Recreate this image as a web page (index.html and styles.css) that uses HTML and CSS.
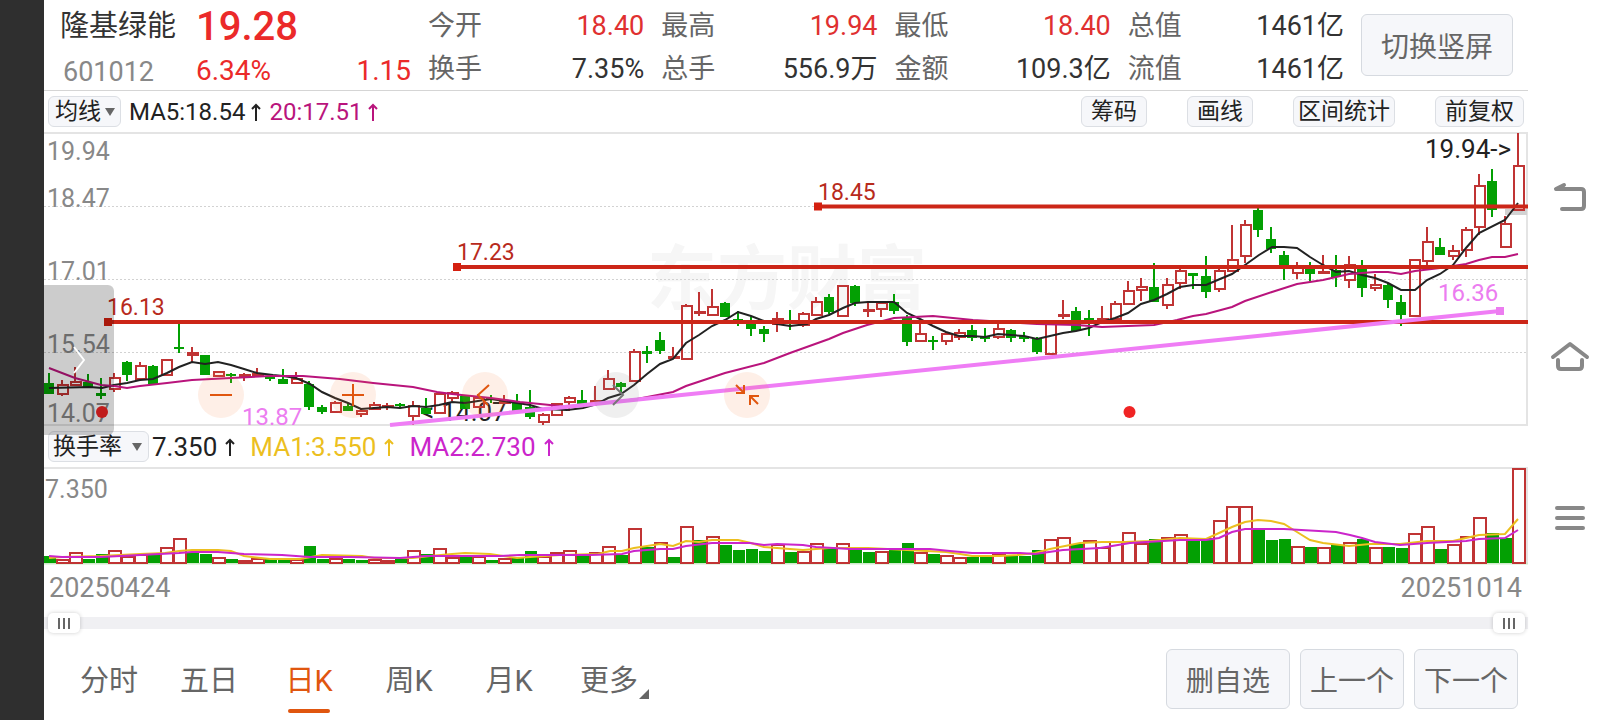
FILE: index.html
```html
<!DOCTYPE html>
<html lang="zh-CN">
<head>
    <meta charset="utf-8">
    <title>隆基绿能 601012</title>
    <link rel="stylesheet" href="styles.css">
</head>
<body>
    <div class="edge"></div>
    <main class="stock">
        <header class="quote">
            <div class="identity">
                <h1 class="name">隆基绿能</h1>
                <span class="code">601012</span>
            </div>
            <div class="price">
                <strong class="last">19.28</strong>
                <div class="change"><span>6.34%</span><span>1.15</span></div>
            </div>
            <dl class="stats">
                <div><dt>今开</dt><dd class="up">18.40</dd></div>
                <div><dt>最高</dt><dd class="up">19.94</dd></div>
                <div><dt>最低</dt><dd class="up">18.40</dd></div>
                <div><dt>总值</dt><dd>1461亿</dd></div>
                <div><dt>换手</dt><dd>7.35%</dd></div>
                <div><dt>总手</dt><dd>556.9万</dd></div>
                <div><dt>金额</dt><dd>109.3亿</dd></div>
                <div><dt>流值</dt><dd>1461亿</dd></div>
            </dl>
            <button class="rotate">切换竖屏</button>
        </header>

        <div class="toolbar">
            <button class="chip drop">均线<i class="caret"></i></button>
            <span class="ma ma5">MA5:18.54<svg class="arrow" viewBox="0 0 10 18"><path d="M5 18V2M1 6l4-4 4 4"/></svg></span>
            <span class="ma ma20">20:17.51<svg class="arrow" viewBox="0 0 10 18"><path d="M5 18V2M1 6l4-4 4 4"/></svg></span>
            <div class="tools">
                <button class="chip">筹码</button>
                <button class="chip">画线</button>
                <button class="chip tight">区间统计</button>
                <button class="chip">前复权</button>
            </div>
        </div>

        <section class="chart">
            <svg class="kline" viewBox="44 132 1484 294" preserveAspectRatio="none">
                <text class="watermark" x="647" y="304">东方财富</text>
                <path class="grid" d="M44 206.500H1527M44 279.500H1527M44 352.500H1527"/>
                <path class="frame" d="M44 133H1527V425H44"/>
                <rect x="1505" y="209" width="22" height="6" fill="#d2d2d2"/>
                <g class="axis">
                    <text x="47" y="160">19.94</text>
                    <text x="47" y="207">18.47</text>
                    <text x="47" y="280">17.01</text>
                    <text x="47" y="353">15.54</text>
                    <text x="47" y="422">14.07</text>
                </g>
                <text class="mark" x="1425" y="158">19.94-&gt;</text>
                <text class="mark" x="421" y="421">&lt;-14.07</text>
                <g id="candles"></g>
                <polyline id="ma5" class="line" stroke="#222"/>
                <polyline id="ma20" class="line" stroke="#b9147c"/>
                <g class="level">
                    <path d="M108 322H1528M457 267H1528M818 206.500H1528"/>
                    <path class="knob" d="M104 318h8v8h-8zM453 263h8v8h-8zM814 202.500h8v8h-8z"/>
                    <text x="107" y="315">16.13</text>
                    <text x="457" y="260">17.23</text>
                    <text x="818" y="200">18.45</text>
                </g>
                <g class="trend">
                    <path d="M390 425L1500 311"/>
                    <path class="knob" d="M1496 307h8v8h-8z"/>
                    <text x="242" y="425">13.87</text>
                    <text x="1438" y="301">16.36</text>
                </g>
                <circle cx="102" cy="412" r="6" fill="#f02424"/>
                <circle cx="1129.500" cy="412" r="6" fill="#f02424"/>
            </svg>
            <button class="round minus" aria-label="缩小"><svg viewBox="0 0 46 46"><path d="M12 23h22"/></svg></button>
            <button class="round plus" aria-label="放大"><svg viewBox="0 0 46 46"><path d="M12 23h22M23 12v22"/></svg></button>
            <button class="round prev" aria-label="左移"><svg viewBox="0 0 46 46"><path d="M27 13L16 23l10 10"/></svg></button>
            <button class="round next" aria-label="右移"><svg viewBox="0 0 46 46"><path d="M20 13l10 10-10 10"/></svg></button>
            <button class="round shrink" aria-label="收起"><svg viewBox="0 0 46 46"><path d="M12 21h8v-8M12 13l8 8M26 33v-9h9M26 24l8 8"/></svg></button>
            <button class="drawer" aria-label="展开"><svg viewBox="0 0 12 28"><path d="M1 1l10 13L1 27"/></svg></button>
        </section>

        <div class="toolbar turnover">
            <button class="chip drop">换手率<i class="caret"></i></button>
            <span class="ma">7.350<svg class="arrow" viewBox="0 0 10 18"><path d="M5 18V2M1 6l4-4 4 4"/></svg></span>
            <span class="ma ma1">MA1:3.550<svg class="arrow" viewBox="0 0 10 18"><path d="M5 18V2M1 6l4-4 4 4"/></svg></span>
            <span class="ma ma2">MA2:2.730<svg class="arrow" viewBox="0 0 10 18"><path d="M5 18V2M1 6l4-4 4 4"/></svg></span>
        </div>

        <svg class="volume" viewBox="44 467 1484 98" preserveAspectRatio="none">
            <path class="frame" d="M44 468H1527V564"/>
            <path d="M44 563.500H1528" stroke="#cfeacb" stroke-width="2"/>
            <text class="axis" x="45" y="498">7.350</text>
            <g id="bars"></g>
            <polyline id="vma1" class="line" stroke="#ecbf1f"/>
            <polyline id="vma2" class="line" stroke="#cb25cb"/>
        </svg>

        <div class="dates"><span>20250424</span><span>20251014</span></div>

        <div class="range">
            <input type="range" min="0" max="100" value="0" aria-label="开始日期">
            <input type="range" min="0" max="100" value="100" aria-label="结束日期">
        </div>

        <footer class="bottom">
            <nav class="tabs">
                <a href="#">分时</a>
                <a href="#">五日</a>
                <a href="#" class="active">日K</a>
                <a href="#">周K</a>
                <a href="#">月K</a>
                <a href="#" class="more">更多</a>
            </nav>
            <div class="actions">
                <button class="remove">删自选</button>
                <button>上一个</button>
                <button>下一个</button>
            </div>
        </footer>
    </main>

    <nav class="system">
        <button aria-label="返回"><svg width="40" height="32" viewBox="0 0 40 32"><path d="M14 4L6 8H31Q34 8 34 11V25Q34 28 31 28H12"/></svg></button>
        <button aria-label="主页"><svg width="40" height="32" viewBox="0 0 40 32"><path d="M3 16L20 3l17 13M8 19v6q0 3 3 3h18q3 0 3-3v-6"/></svg></button>
        <button aria-label="菜单"><svg width="40" height="32" viewBox="0 0 40 32"><path d="M7 7h26M7 17h26M7 27h26"/></svg></button>
    </nav>
    <script src="chart.js"></script>
</body>
</html>
```

FILE: styles.css
```css
* {
    box-sizing: border-box;
}
body {
    margin: 0;
    min-height: 100vh;
    display: flex;
    background: #fff;
    color: #333;
    font-family: Roboto, "Noto Sans CJK SC", sans-serif;
    font-size: 27px;
}
button {
    padding: 0;
    border: 1px solid #d6dae0;
    border-radius: 6px;
    background: #f6f7fa;
    color: #666;
    font-family: inherit;
    font-size: 28px;
    cursor: pointer;
}
.edge {
    width: 44px;
    background: #2f2f2f;
}
.stock {
    flex: 1;
    min-width: 0;
}

/* quote header */
.quote {
    display: flex;
    height: 91px;
    padding: 5px 15px 0 16px;
    border-bottom: 1px solid #d5d5d5;
    line-height: 42px;
}
.identity {
    width: 136px;
}
.name {
    margin: 0;
    font-size: 29px;
    font-weight: 400;
}
.code {
    display: block;
    padding-left: 3px;
    line-height: 50px;
    color: #888;
}
.price {
    width: 232px;
    color: #eb2a2a;
}
.last {
    display: block;
    font-size: 40px;
    font-weight: 500;
    line-height: 44px;
}
.change {
    display: flex;
    justify-content: space-between;
    padding-right: 17px;
    line-height: 44px;
    font-size: 28px;
}
.stats {
    flex: 1;
    display: grid;
    grid-template-columns: repeat(4, 1fr);
    margin: 0;
}
.stats div {
    display: flex;
    justify-content: space-between;
    padding-right: 17px;
}
.stats dt {
    color: #666;
}
.stats dd {
    margin: 0;
}
.stats .up {
    color: #e03030;
}
.rotate {
    width: 152px;
    height: 62px;
    margin-top: 9px;
}

/* indicator rows */
.toolbar {
    display: flex;
    align-items: center;
    height: 41px;
    padding: 0 4px;
    color: #222;
    font-size: 24px;
}
.chip {
    height: 31px;
    padding: 0 9px;
    border-color: #dcdfe4;
    color: #222;
    font-size: 23px;
    line-height: 28px;
}
.chip.tight {
    padding: 0 4px;
}
.chip.drop {
    display: flex;
    align-items: center;
    justify-content: space-between;
    width: 73px;
    padding: 0 5px 0 6px;
}
.turnover .chip.drop {
    width: 101px;
    padding: 0 6px 0 4px;
}
.caret {
    border: 5px solid transparent;
    border-top: 8px solid #666;
    border-bottom: 0;
}
.ma {
    display: flex;
    align-items: center;
    gap: 6px;
    margin-left: 8px;
}
.turnover .ma {
    margin-left: 15px;
    gap: 8px;
    font-size: 26px;
}
.turnover .chip + .ma {
    margin-left: 3px;
}
.ma20 {
    color: #b9147c;
}
.turnover .ma1 {
    color: #ecbf1f;
}
.turnover .ma2 {
    color: #cb25cb;
}
.arrow {
    width: 10px;
    height: 18px;
    fill: none;
    stroke: currentColor;
    stroke-width: 2;
}
.tools {
    display: flex;
    gap: 40px;
    margin-left: auto;
}

/* charts */
.chart {
    position: relative;
    height: 294px;
}
.kline, .volume {
    display: block;
    width: 100%;
    height: 294px;
    overflow: visible;
}
.volume {
    height: 98px;
}
.frame {
    fill: none;
    stroke: #e4e4e4;
    stroke-width: 2;
}
.grid {
    stroke: #d2d2d2;
    stroke-dasharray: 2 2;
}
.watermark {
    fill: #f6f6f6;
    font-size: 70px;
    font-weight: 700;
}
.axis {
    fill: #888;
    font-size: 25px;
}
.mark {
    fill: #222;
    font-size: 26px;
}
.line {
    fill: none;
    stroke-width: 2;
}
.down {
    fill: #03a003;
}
.rise {
    fill: none;
    stroke: #c03434;
    stroke-width: 2;
}
.wick {
    fill: none;
    stroke: #c03434;
    stroke-width: 2;
}
.wick.fall {
    stroke: #03a003;
}
.level {
    fill: #b82a1c;
    stroke-width: 4;
    font-size: 23px;
}
.level path {
    stroke: #cc2618;
}
.trend {
    fill: #ec7df0;
    stroke-width: 4;
    font-size: 24px;
}
.trend path {
    stroke: #ef7df5;
}
.level .knob, .trend .knob {
    stroke: none;
}
.level .knob {
    fill: #d42010;
}

/* controls over the chart */
.round {
    position: absolute;
    top: 240px;
    width: 46px;
    height: 46px;
    border: 0;
    border-radius: 50%;
    background: rgba(245, 125, 60, 0.12);
    color: #e0560f;
}
.round svg {
    display: block;
    fill: none;
    stroke: currentColor;
    stroke-width: 2;
}
.minus {
    left: 10.4%;
}
.plus {
    left: 19.3%;
}
.prev {
    left: 28.2%;
}
.next {
    left: 37%;
    background: rgba(120, 120, 120, 0.12);
    color: #777;
}
.shrink {
    left: 45.8%;
}
.drawer {
    position: absolute;
    left: 0;
    top: 153px;
    width: 70px;
    height: 150px;
    border: 0;
    border-radius: 0 6px 6px 0;
    background: rgba(0, 0, 0, 0.2);
}
.drawer svg {
    display: block;
    width: 12px;
    height: 28px;
    margin: 0 auto;
    fill: none;
    stroke: #fff;
    stroke-width: 2;
}

.dates {
    display: flex;
    justify-content: space-between;
    padding: 0 6px 0 5px;
    color: #888;
    line-height: 46px;
}

/* date range slider */
.range {
    position: relative;
    height: 24px;
    background: linear-gradient(#f0f0f3, #f0f0f3) center / 100% 12px no-repeat;
}
.range input {
    -webkit-appearance: none;
    appearance: none;
    position: absolute;
    left: 4px;
    top: 0;
    width: calc(100% - 7px);
    height: 24px;
    margin: 0;
    background: none;
    pointer-events: none;
}
.range input::-webkit-slider-thumb {
    -webkit-appearance: none;
    width: 32px;
    height: 20px;
    border-radius: 5px;
    background:
        linear-gradient(#666, #666) 10px 5px / 2px 11px no-repeat,
        linear-gradient(#666, #666) 15px 5px / 2px 11px no-repeat,
        linear-gradient(#666, #666) 20px 5px / 2px 11px no-repeat,
        #fff;
    box-shadow: 0 0 4px rgba(0, 0, 0, 0.2);
    pointer-events: auto;
}

/* period tabs and actions */
.bottom {
    display: flex;
    align-items: center;
    justify-content: space-between;
    height: 84px;
    padding: 4px 10px 0 15px;
}
.tabs {
    display: flex;
    padding-top: 4px;
}
.tabs a {
    position: relative;
    width: 100px;
    color: #666;
    font-size: 29px;
    line-height: 60px;
    text-align: center;
    text-decoration: none;
}
.tabs .active {
    color: #e0560f;
}
.tabs .active::after {
    content: "";
    position: absolute;
    left: 29px;
    right: 29px;
    bottom: -2px;
    height: 4px;
    border-radius: 2px;
    background: #e0560f;
}
.more::after {
    content: "";
    position: absolute;
    right: 10px;
    bottom: 12px;
    border-left: 10px solid transparent;
    border-bottom: 10px solid #666;
}
.actions {
    display: flex;
    gap: 10px;
}
.actions button {
    width: 104px;
    height: 60px;
}
.actions .remove {
    width: 124px;
}

.system {
    display: flex;
    flex-direction: column;
    justify-content: center;
    width: 84px;
}
.system button {
    height: 160px;
    border: 0;
    background: none;
}
.system svg {
    fill: none;
    stroke: #888;
    stroke-width: 4;
    stroke-linecap: round;
    stroke-linejoin: round;
}
```

FILE: chart.js
```javascript
const FIRST_X = 49;
const STEP = 13;
const BASE = 562;

// one entry per day: direction (g falls, r rises), high, body top, body bottom, low
const candles = `
g 373 383 394 394|r 380 384 395 396|r 367 381 386 386|g 374 382 387 387|g 378 393 396 399
r 373 377 390 392|g 361 362 375 381|r 362 365 380 380|g 365 366 384 384|r 359 359 376 376
g 324 347 349 353|r 347 352 356 363|g 355 355 375 375|r 371 371 377 377|g 373 374 376 383
r 373 374 376 381|r 368 373 376 376|g 374 377 379 381|g 369 379 384 384|r 372 378 384 384
g 381 384 407 410|g 405 407 412 414|r 401 402 413 413|g 403 406 411 411|r 409 410 415 417
r 402 404 410 410|r 403 405 407 410|g 403 404 406 408|r 401 405 417 425|g 398 408 414 414
r 392 393 414 414|r 391 392 399 401|g 395 396 409 409|r 394 397 408 408|g 395 398 400 403
r 395 400 404 404|g 394 402 411 411|g 390 407 417 419|r 413 414 423 425|r 403 403 416 416
r 396 397 403 411|g 390 400 405 405|r 386 400 403 403|r 370 378 390 390|g 382 383 387 393
r 349 351 382 382|g 346 351 354 363|g 332 340 351 354|r 347 356 358 358|r 304 305 360 360
r 292 311 313 316|r 289 306 316 316|g 302 303 317 317|g 311 319 321 326|g 317 324 329 336
g 326 329 334 342|r 312 318 325 332|g 310 321 323 330|r 312 313 326 327|r 297 301 316 316
g 294 297 312 314|r 285 285 317 317|g 285 286 303 306|r 301 309 311 317|r 301 302 310 317
g 294 302 311 314|g 315 317 342 346|r 324 333 342 342|g 336 340 342 350|r 332 333 342 345
r 329 332 338 340|g 325 330 338 341|g 328 337 339 342|r 324 328 338 339|g 329 330 338 342
g 332 336 339 342|g 337 338 352 354|r 322 323 355 355|r 300 314 316 319|g 307 311 331 331
g 310 318 320 336|r 306 318 323 323|r 301 303 320 320|r 281 290 305 305|r 278 286 291 301
g 263 287 302 302|r 278 284 306 309|r 265 270 284 289|g 273 273 276 289|g 256 276 292 298
r 268 270 290 292|r 225 259 272 272|r 220 224 257 263|g 208 210 230 237|g 227 239 249 253
g 251 255 269 280|r 262 265 274 279|g 262 268 274 281|r 255 271 274 274|g 255 270 277 287
r 256 264 281 288|g 260 265 288 297|r 274 284 289 291|g 283 285 300 308|g 295 302 315 326
r 259 259 317 317|r 227 241 262 265|g 238 247 255 255|r 245 250 257 260|r 227 229 251 257
r 174 185 228 235|g 169 181 210 217|r 216 223 248 248|r 133 165 211 211`.trim().split(/[|\n]/);

// turnover bars: direction and top edge
const volumes = `
g556 r559 r552 g559 g554 r550 r556 r554 g555 r547 r538 g553 g554 r557 g559 r560 r558 g559 g560
r559 g546 g559 r558 g559 g560 r559 r560 g559 r550 g554 r548 r557 g557 r556 g560 r558 g558 g551
r556 r552 r550 g556 r552 r546 g555 r528 g547 r542 g557 r526 g540 r536 g545 g550 g549 g551 r544
g552 r551 r543 g548 r543 g549 g552 r551 g550 g543 r552 g554 r555 r557 g557 g557 r554 g556 g556
g550 r539 r537 g544 r540 r547 r541 r532 r543 g539 r537 r534 g540 g538 r520 r506 r506 g530 g540
g539 r546 g547 r547 g545 r542 g539 r547 g547 g548 r533 r526 g549 r544 r536 r517 g533 g538 r468`.trim().split(/\s+/);

const lines = {
    ma5: '49,388 90,387 102,388 114,385 127,383 140,380 153,379 167,373 179,367 192,362 205,364 218,362 231,365 244,369 257,373 273,375 283,376 296,378 310,384 322,392 335,398 348,403 361,409 374,408 387,407 400,408 413,406 426,407 439,405 452,402 465,403 478,401 491,399 504,401 517,403 530,405 543,409 567,410 583,408 597,404 608,398 621,394 634,385 647,374 660,364 673,359 686,343 699,335 712,326 725,320 738,312 751,316 764,321 777,324 790,326 807,324 816,319 829,315 843,308 855,303 868,302 894,302 907,313 920,319 933,326 946,332 959,336 972,336 985,337 998,334 1011,335 1024,336 1037,339 1050,336 1063,333 1076,331 1089,328 1102,322 1115,318 1128,313 1141,304 1154,300 1167,294 1180,287 1193,285 1206,285 1220,279 1232,274 1245,265 1259,255 1272,247 1284,247 1297,248 1310,257 1323,265 1336,272 1349,271 1362,275 1375,278 1388,283 1401,290 1415,290 1427,280 1440,274 1453,265 1466,248 1479,233 1505,220 1518,203',
    ma20: '49,368 75,378 101,385 114,386 127,388 140,386 167,383 192,380 231,378 270,376 303,376 340,379 373,383 413,387 437,392 452,394 491,398 520,402 550,405 567,407 597,404 637,399 673,392 686,386 725,373 764,363 790,353 829,339 843,333 867,325 894,318 933,316 973,320 1037,324 1077,325 1102,327 1154,325 1177,320 1193,316 1206,314 1232,307 1245,301 1272,292 1297,284 1323,280 1349,274 1375,272 1388,272 1401,274 1415,271 1440,268 1466,264 1479,260 1492,257 1505,257 1518,254',
    vma1: '49,558 62,557 100,556 140,554 165,553 179,551 192,550 218,550 231,551 244,556 270,559 300,559 322,555 362,556 374,558 413,558 430,556 452,554 465,553 490,554 517,558 530,557 545,556 560,555 598,554 610,551 622,551 634,548 660,544 673,546 686,541 699,542 712,540 738,540 751,543 764,547 790,549 803,550 829,548 868,548 907,550 946,552 960,554 972,556 1000,556 1018,555 1035,553 1050,549 1080,543 1102,542 1125,542 1150,541 1180,538 1206,539 1219,533 1232,527 1245,522 1258,520 1271,521 1284,524 1297,532 1310,540 1323,543 1349,546 1370,544 1400,544 1427,541 1453,541 1466,538 1479,535 1505,534 1518,519',
    vma2: '49,556 62,557 101,557 140,555 179,553 192,552 218,552 244,554 282,555 310,557 350,557 400,558 426,556 465,556 500,556 520,555 590,555 622,554 634,551 660,549 673,549 686,546 712,543 750,543 764,545 777,544 803,545 816,547 850,549 930,549 950,551 972,553 1020,553 1035,554 1063,550 1100,548 1130,543 1180,540 1206,540 1219,538 1232,532 1245,529 1284,529 1336,532 1350,535 1362,538 1375,542 1400,545 1427,543 1466,541 1479,539 1505,538 1518,530'
};

function body(dir, x, top, bottom) {
    if (dir == 'g') {
        return `<rect class="down" x="${x - 5}" y="${top}" width="10" height="${Math.max(bottom - top, 2)}"/>`;
    }
    return `<rect class="rise" x="${x - 4}" y="${top + 1}" width="10" height="${Math.max(bottom - top - 2, 1)}"/>`;
}

document.getElementById('candles').innerHTML = candles.map((row, i) => {
    const [dir, ...values] = row.split(' ');
    const [high, top, bottom, low] = values.map(Number);
    const x = FIRST_X + i * STEP;
    const wick = `M${x} ${high}V${top}M${x} ${bottom}V${low}`;
    return `<path class="wick ${dir == 'g' ? 'fall' : ''}" d="${wick}"/>` + body(dir, x, top, bottom);
}).join('');

document.getElementById('bars').innerHTML = volumes.map((item, i) => {
    const x = FIRST_X + i * STEP;
    const top = Number(item.slice(1));
    if (item[0] == 'g') {
        return `<rect class="down" x="${x - 5}" y="${top}" width="12" height="${BASE - top + 1}"/>`;
    }
    return `<rect class="rise" x="${x - 5}" y="${top + 1}" width="12" height="${BASE - top}"/>`;
}).join('');

for (const id in lines) {
    document.getElementById(id).setAttribute('points', lines[id]);
}
```
